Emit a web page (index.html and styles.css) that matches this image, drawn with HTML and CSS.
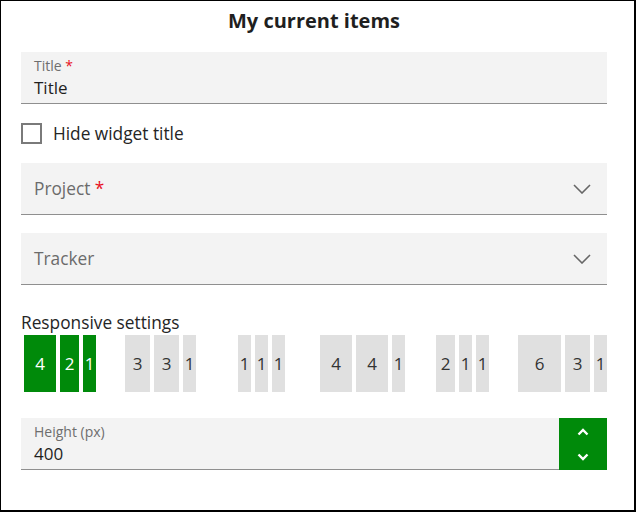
FILE: index.html
```html
<!DOCTYPE html>
<html lang="en">
<head>
    <meta charset="UTF-8">
    <title>My current items</title>
    <link rel="stylesheet" href="styles.css">
</head>
<body>
    <div id="panel">
        <h1>My current items</h1>

        <!-- title text field -->
        <div class="field">
            <div class="field-body">
                <span class="field-label">Title <span class="req">*</span></span>
                <span class="field-value">Title</span>
            </div>
        </div>

        <label class="check">
            <span class="check-box"></span>
            Hide widget title
        </label>

        <!-- dropdowns -->
        <div class="field dropdown" id="project">
            <span class="dropdown-label">Project <span class="req">*</span></span>
            <svg class="chev" width="18" height="10" viewBox="0 0 18 10"><polyline points="1,1 9,9 17,1" fill="none" stroke="#666" stroke-width="1.6"/></svg>
        </div>
        <div class="field dropdown" id="tracker">
            <span class="dropdown-label">Tracker</span>
            <svg class="chev" width="18" height="10" viewBox="0 0 18 10"><polyline points="1,1 9,9 17,1" fill="none" stroke="#666" stroke-width="1.6"/></svg>
        </div>

        <p id="resp-label">Responsive settings</p>
        <div id="resp">
            <div class="group">
                <span class="cell s4 on">4</span>
                <span class="cell s2 on">2</span>
                <span class="cell s1 on">1</span>
            </div>
            <div class="group">
                <span class="cell s3">3</span>
                <span class="cell s3">3</span>
                <span class="cell s1">1</span>
            </div>
            <div class="group">
                <span class="cell s1">1</span>
                <span class="cell s1">1</span>
                <span class="cell s1">1</span>
            </div>
            <div class="group">
                <span class="cell s4">4</span>
                <span class="cell s4">4</span>
                <span class="cell s1">1</span>
            </div>
            <div class="group">
                <span class="cell s2">2</span>
                <span class="cell s1">1</span>
                <span class="cell s1">1</span>
            </div>
            <div class="group">
                <span class="cell s6">6</span>
                <span class="cell s3">3</span>
                <span class="cell s1">1</span>
            </div>
        </div>

        <!-- number field with spinner -->
        <div class="number">
            <div class="field number-input">
                <div class="field-body">
                    <span class="field-label">Height (px)</span>
                    <span class="field-value">400</span>
                </div>
            </div>
            <div class="spinner">
                <svg width="12" height="8" viewBox="0 0 12 8"><polyline points="1.5,6.5 6,2 10.5,6.5" fill="none" stroke="white" stroke-width="2.4"/></svg>
                <svg width="12" height="8" viewBox="0 0 12 8"><polyline points="1.5,1.5 6,6 10.5,1.5" fill="none" stroke="white" stroke-width="2.4"/></svg>
            </div>
        </div>
    </div>
</body>
</html>
```

FILE: styles.css
```css
/* panel layout */
body {
    margin: 0;
    font-family: "Open Sans", "Noto Sans", sans-serif;
    color: #252525;
    background: white;
}
#panel {
    box-sizing: border-box;
    width: 636px;
    height: 512px;
    border: 1px solid black;
    border-right-width: 2px;
    border-bottom-width: 2px;
    padding: 0 27px 0 20px;
}
h1 {
    margin: 0;
    height: 51px;
    padding-top: 6px;
    box-sizing: border-box;
    text-align: center;
    font-size: 20px;
    font-weight: 700;
    line-height: 28px;
    color: #1f1f1f;
}

/* fields */
.field {
    background-color: #f3f3f3;
    border-bottom: 1px solid #8f8f8f;
    height: 51px;
    padding: 0 13px;
}
.field-body {
    display: flex;
    flex-direction: column;
    justify-content: center;
    height: 100%;
}
.field-label {
    font-size: 14px;
    line-height: 19.5px;
    color: #6e6e6e;
}
.field-value {
    font-size: 17px;
    line-height: 23.5px;
    color: #1f1f1f;
}
.req {
    color: #e81123;
}

.check {
    display: flex;
    align-items: center;
    gap: 11px;
    margin-top: 19px;
    font-size: 17.3px;
    line-height: 21px;
    color: #252525;
}
.check-box {
    box-sizing: border-box;
    width: 21px;
    height: 21px;
    border: 2px solid #7a7a7a;
}

.dropdown {
    display: flex;
    align-items: center;
    justify-content: space-between;
    padding-right: 16px;
}
#project {
    margin-top: 19px;
}
#tracker {
    margin-top: 18px;
}
.dropdown-label {
    font-size: 17.3px;
    color: #6b6b6b;
}

/* responsive settings */
#resp-label {
    margin: 27px 0 0 0;
    font-size: 17.3px;
    line-height: 22px;
    color: #252525;
}
#resp {
    display: grid;
    grid-template-columns: 101px 113px 82px 116px 82px auto;
    padding-left: 3px;
    margin-top: 1px;
}
.group {
    display: flex;
    gap: 4px;
}
.cell {
    height: 57px;
    background-color: #e0e0e0;
    display: flex;
    align-items: center;
    justify-content: center;
    font-size: 17px;
    color: #333;
}
.cell.on {
    background-color: #008a0a;
    color: white;
}
.s1 { width: 13px; }
.s2 { width: 19px; }
.s3 { width: 25px; }
.s4 { width: 32px; }
.s6 { width: 43px; }

/* height input */
.number {
    display: flex;
    margin-top: 26px;
}
.number-input {
    flex: 1;
}
.spinner {
    width: 48px;
    height: 52px;
    background-color: #008a0a;
    display: flex;
    flex-direction: column;
    align-items: center;
    justify-content: center;
    gap: 17px;
}
.spinner svg {
    display: block;
}
```
